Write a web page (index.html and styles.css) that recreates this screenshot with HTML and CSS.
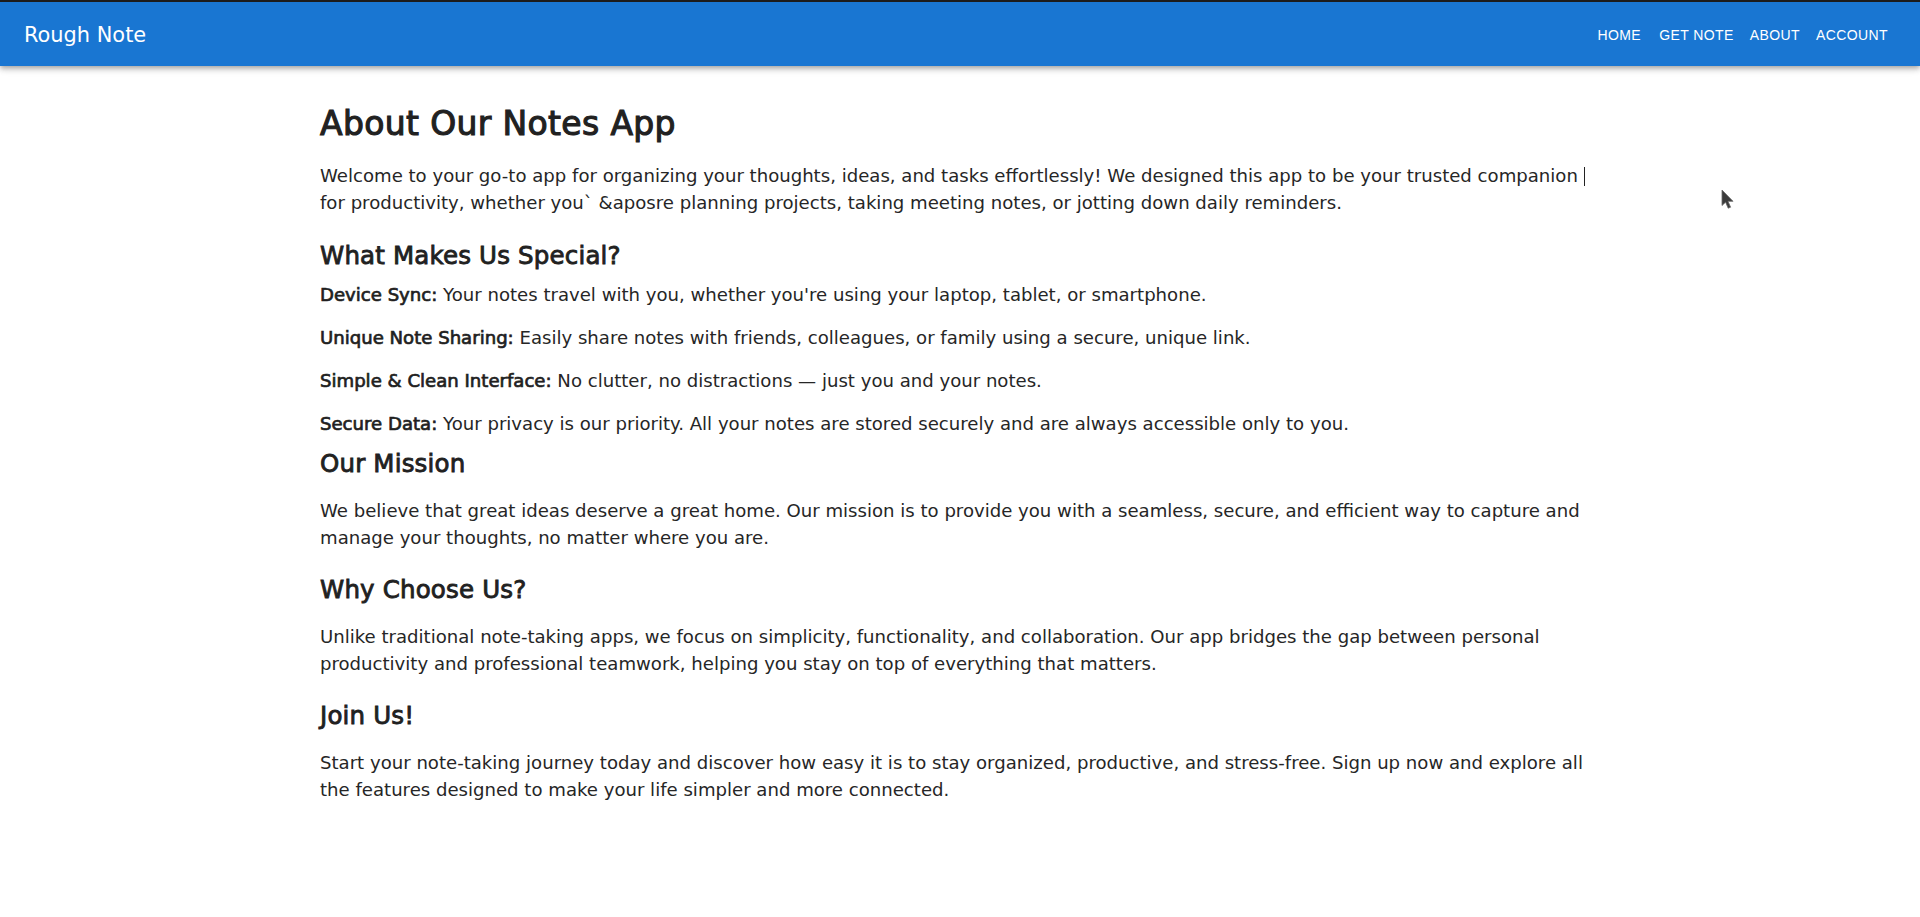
FILE: index.html
```html
<!DOCTYPE html>
<html lang="en">
<head>
<meta charset="utf-8">
<title>Rough Note - About</title>
<link rel="stylesheet" href="styles.css">
</head>
<body>
<header class="appbar">
  <div class="brand">Rough Note</div>
  <nav class="nav">
    <a class="nav-btn" href="#">Home</a>
    <a class="nav-btn" href="#">Get Note</a>
    <a class="nav-btn" href="#">About</a>
    <a class="nav-btn" href="#">Account</a>
  </nav>
</header>

<main class="content">
  <h1 class="title">About Our Notes App</h1>
  <p class="text lead">Welcome to your go-to app for organizing your thoughts, ideas, and tasks effortlessly! We designed this app to be your trusted companion <span class="caret"></span>for productivity, whether you` &amp;aposre planning projects, taking meeting notes, or jotting down daily reminders.</p>

  <section class="features">
    <h2 class="heading heading-tight">What Makes Us Special?</h2>
    <div class="feature-list">
      <p class="text"><strong class="label">Device Sync:</strong> Your notes travel with you, whether you're using your laptop, tablet, or smartphone.</p>
      <p class="text"><strong class="label">Unique Note Sharing:</strong> Easily share notes with friends, colleagues, or family using a secure, unique link.</p>
      <p class="text"><strong class="label">Simple &amp; Clean Interface:</strong> No clutter, no distractions — just you and your notes.</p>
      <p class="text"><strong class="label">Secure Data:</strong> Your privacy is our priority. All your notes are stored securely and are always accessible only to you.</p>
    </div>
  </section>

  <section class="block">
    <h2 class="heading">Our Mission</h2>
    <p class="text">We believe that great ideas deserve a great home. Our mission is to provide you with a seamless, secure, and efficient way to capture and manage your thoughts, no matter where you are.</p>
  </section>

  <section class="block">
    <h2 class="heading">Why Choose Us?</h2>
    <p class="text">Unlike traditional note-taking apps, we focus on simplicity, functionality, and collaboration. Our app bridges the gap between personal productivity and professional teamwork, helping you stay on top of everything that matters.</p>
  </section>

  <section class="block">
    <h2 class="heading">Join Us!</h2>
    <p class="text">Start your note-taking journey today and discover how easy it is to stay organized, productive, and stress-free. Sign up now and explore all the features designed to make your life simpler and more connected.</p>
  </section>
</main>

<svg class="pointer" width="14" height="21" viewBox="0 0 14 21" aria-hidden="true">
  <path d="M1 1 L1 16.5 L4.6 13.2 L7.2 19.2 L9.6 18.2 L7 12.3 L12 12.3 Z" fill="#3b3b3b" stroke="#6a6a6a" stroke-width="0.8" stroke-linejoin="round"/>
</svg>
</body>
</html>
```
FILE: styles.css
```css
html, body {
  margin: 0;
  padding: 0;
  background: #ffffff;
}

body {
  font-family: "DejaVu Sans", "Noto Sans", sans-serif;
  color: #212121;
}

.appbar {
  display: flex;
  align-items: center;
  justify-content: space-between;
  box-sizing: border-box;
  height: 66px;
  padding: 2px 24px 0;
  background: #1976d2;
  color: #ffffff;
  border-top: 2px solid #1c1c1c;
  box-shadow: 0 2px 4px -1px rgba(0,0,0,0.2), 0 4px 5px 0 rgba(0,0,0,0.14), 0 1px 10px 0 rgba(0,0,0,0.12);
  position: relative;
  z-index: 2;
}

.brand {
  font-family: "DejaVu Sans", sans-serif;
  font-size: 20.9px;
  font-weight: 400;
  line-height: 32px;
}

.nav {
  display: flex;
  align-items: center;
}

.nav-btn {
  display: inline-flex;
  justify-content: center;
  align-items: center;
  min-width: 64px;
  box-sizing: border-box;
  padding: 6px 8px;
  font-family: "Liberation Sans", Arial, sans-serif;
  font-size: 14px;
  font-weight: 400;
  line-height: 24.5px;
  letter-spacing: 0.4px;
  text-transform: uppercase;
  color: #ffffff;
  text-decoration: none;
  border-radius: 4px;
}

.content {
  width: 1280px;
  margin: 0 auto;
  padding-top: 39px;
}

.title {
  margin: 0 0 19px;
  font-size: 33px;
  font-weight: 400;
  letter-spacing: 0.35px;
  -webkit-text-stroke: 1.1px #212121;
  line-height: 38px;
  color: #212121;
}

.text {
  margin: 0;
  font-size: 18.1px;
  line-height: 27px;
  color: #262626;
}

.lead {
  margin-bottom: 24px;
}

.caret {
  display: inline-block;
  width: 1px;
  height: 19px;
  background: #222;
  vertical-align: -4px;
}

.heading {
  margin: 0 0 17px;
  padding-top: 1px;
  font-size: 24.5px;
  font-weight: 400;
  letter-spacing: 0.17px;
  -webkit-text-stroke: 0.85px #212121;
  line-height: 32px;
  color: #212121;
}

.heading-tight {
  padding-top: 0;
  margin-bottom: 9px;
}

.features {
  margin-bottom: 10px;
}

.feature-list {
  display: flex;
  flex-direction: column;
  gap: 16px;
}

.label {
  font-weight: 400;
  -webkit-text-stroke: 0.7px #1f1f1f;
  color: #1f1f1f;
}

.block {
  margin-bottom: 22px;
}

.pointer {
  position: absolute;
  left: 1721px;
  top: 189px;
}
```
